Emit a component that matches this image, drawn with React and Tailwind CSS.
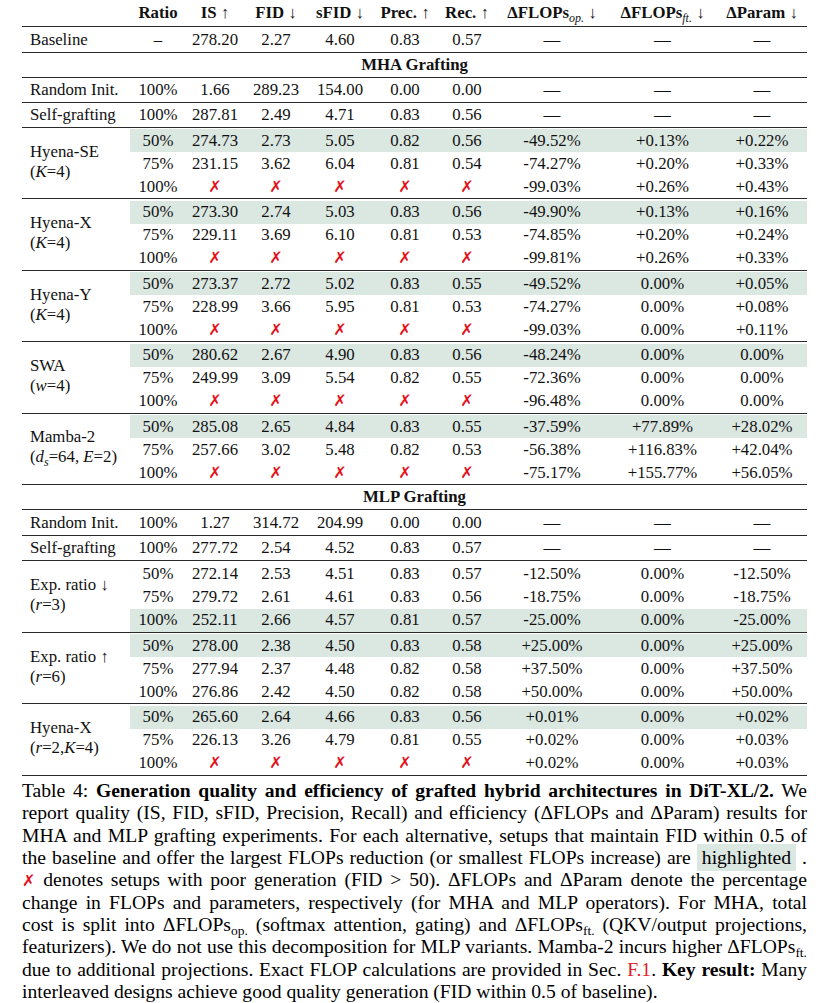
import React from 'react';

const cols = 'grid grid-cols-[56px_58px_64px_64px_66px_58px_112px_109px_90px] items-center';

const X = () => (
  <span className="[font-family:'DejaVu_Sans',sans-serif] font-bold text-[16px] leading-none text-[#e3121b]">✗</span>
);

const Sub = ({ children, italic }) => (
  <span className={italic ? 'relative top-[4px] text-[12px] italic font-normal' : 'relative top-[4px] text-[13.5px]'}>{children}</span>
);

const Arrow = ({ up }) => <span className="font-normal">{up ? ' ↑' : ' ↓'}</span>;

function Cells({ v, hl, tall }) {
  return (
    <div className={`${cols} ${tall ? 'h-full' : 'h-[23.07px]'} ${hl ? 'bg-[#dbe7e1]' : ''}`}>
      {v.map((x, i) => (
        <div key={i} className="text-center whitespace-nowrap">
          {x === 'x' ? <X /> : x}
        </div>
      ))}
    </div>
  );
}

function SingleRow({ label, v, h }) {
  return (
    <div className={`flex border-b border-[#2a2a2a] ${h}`}>
      <div className="w-[108px] pl-[8px] flex items-center whitespace-nowrap">{label}</div>
      <Cells v={v} tall />
    </div>
  );
}

function Group({ name, param, rows }) {
  return (
    <div className="flex border-b border-[#2a2a2a]">
      <div className="w-[108px] pl-[8px] flex flex-col justify-center leading-[20px] pb-[3px] whitespace-nowrap">
        <div>{name}</div>
        <div>{param}</div>
      </div>
      <div className="flex flex-col pt-[1.3px]">
        {rows.map((r, i) => (
          <Cells key={i} v={r.v} hl={r.hl} />
        ))}
      </div>
    </div>
  );
}

const dash = ['—', '—', '—'];
const xs = ['x', 'x', 'x', 'x', 'x'];

const mha = [
  {
    name: 'Hyena-SE',
    param: <>(<i>K</i>=4)</>,
    rows: [
      { hl: true, v: ['50%', '274.73', '2.73', '5.05', '0.82', '0.56', '-49.52%', '+0.13%', '+0.22%'] },
      { v: ['75%', '231.15', '3.62', '6.04', '0.81', '0.54', '-74.27%', '+0.20%', '+0.33%'] },
      { v: ['100%', ...xs, '-99.03%', '+0.26%', '+0.43%'] },
    ],
  },
  {
    name: 'Hyena-X',
    param: <>(<i>K</i>=4)</>,
    rows: [
      { hl: true, v: ['50%', '273.30', '2.74', '5.03', '0.83', '0.56', '-49.90%', '+0.13%', '+0.16%'] },
      { v: ['75%', '229.11', '3.69', '6.10', '0.81', '0.53', '-74.85%', '+0.20%', '+0.24%'] },
      { v: ['100%', ...xs, '-99.81%', '+0.26%', '+0.33%'] },
    ],
  },
  {
    name: 'Hyena-Y',
    param: <>(<i>K</i>=4)</>,
    rows: [
      { hl: true, v: ['50%', '273.37', '2.72', '5.02', '0.83', '0.55', '-49.52%', '0.00%', '+0.05%'] },
      { v: ['75%', '228.99', '3.66', '5.95', '0.81', '0.53', '-74.27%', '0.00%', '+0.08%'] },
      { v: ['100%', ...xs, '-99.03%', '0.00%', '+0.11%'] },
    ],
  },
  {
    name: 'SWA',
    param: <>(<i>w</i>=4)</>,
    rows: [
      { hl: true, v: ['50%', '280.62', '2.67', '4.90', '0.83', '0.56', '-48.24%', '0.00%', '0.00%'] },
      { v: ['75%', '249.99', '3.09', '5.54', '0.82', '0.55', '-72.36%', '0.00%', '0.00%'] },
      { v: ['100%', ...xs, '-96.48%', '0.00%', '0.00%'] },
    ],
  },
  {
    name: 'Mamba-2',
    param: <>(<i>d</i><span className="relative top-[4px] text-[12px] italic">s</span>=64, <i>E</i>=2)</>,
    rows: [
      { hl: true, v: ['50%', '285.08', '2.65', '4.84', '0.83', '0.55', '-37.59%', '+77.89%', '+28.02%'] },
      { v: ['75%', '257.66', '3.02', '5.48', '0.82', '0.53', '-56.38%', '+116.83%', '+42.04%'] },
      { v: ['100%', ...xs, '-75.17%', '+155.77%', '+56.05%'] },
    ],
  },
];

const mlp = [
  {
    name: <>Exp. ratio ↓</>,
    param: <>(<i>r</i>=3)</>,
    rows: [
      { v: ['50%', '272.14', '2.53', '4.51', '0.83', '0.57', '-12.50%', '0.00%', '-12.50%'] },
      { v: ['75%', '279.72', '2.61', '4.61', '0.83', '0.56', '-18.75%', '0.00%', '-18.75%'] },
      { hl: true, v: ['100%', '252.11', '2.66', '4.57', '0.81', '0.57', '-25.00%', '0.00%', '-25.00%'] },
    ],
  },
  {
    name: <>Exp. ratio ↑</>,
    param: <>(<i>r</i>=6)</>,
    rows: [
      { hl: true, v: ['50%', '278.00', '2.38', '4.50', '0.83', '0.58', '+25.00%', '0.00%', '+25.00%'] },
      { v: ['75%', '277.94', '2.37', '4.48', '0.82', '0.58', '+37.50%', '0.00%', '+37.50%'] },
      { v: ['100%', '276.86', '2.42', '4.50', '0.82', '0.58', '+50.00%', '0.00%', '+50.00%'] },
    ],
  },
  {
    name: 'Hyena-X',
    param: <>(<i>r</i>=2,<i>K</i>=4)</>,
    rows: [
      { hl: true, v: ['50%', '265.60', '2.64', '4.66', '0.83', '0.56', '+0.01%', '0.00%', '+0.02%'] },
      { v: ['75%', '226.13', '3.26', '4.79', '0.81', '0.55', '+0.02%', '0.00%', '+0.03%'] },
      { v: ['100%', ...xs, '+0.02%', '0.00%', '+0.03%'] },
    ],
  },
];

const J = ({ children }) => (
  <div className="h-[22.33px] text-justify [text-align-last:justify] whitespace-nowrap">{children}</div>
);

export default function App() {
  return (
    <div className="min-h-screen bg-white text-[#111] [font-family:'Liberation_Serif','Times_New_Roman',serif]">
      <div className="ml-[22px] w-[785px]">
        {/* table */}
        <div className="text-[16.8px] leading-[20px]">
          <div className="flex h-[27px] border-b border-[#2a2a2a] font-bold">
            <div className="w-[108px]" />
            <div className={`${cols} h-full`}>
              <div className="text-center">Ratio</div>
              <div className="text-center whitespace-nowrap">IS<Arrow up /></div>
              <div className="text-center whitespace-nowrap">FID<Arrow /></div>
              <div className="text-center whitespace-nowrap">sFID<Arrow /></div>
              <div className="text-center whitespace-nowrap">Prec.<Arrow up /></div>
              <div className="text-center whitespace-nowrap">Rec.<Arrow up /></div>
              <div className="text-center whitespace-nowrap">ΔFLOPs<Sub italic>op.</Sub><Arrow /></div>
              <div className="text-center whitespace-nowrap">ΔFLOPs<Sub italic>ft.</Sub><Arrow /></div>
              <div className="text-center whitespace-nowrap">ΔParam<Arrow /></div>
            </div>
          </div>

          <SingleRow h="h-[26px]" label="Baseline" v={['–', '278.20', '2.27', '4.60', '0.83', '0.57', ...dash]} />

          <div className="h-[25px] flex items-center justify-center border-b border-[#2a2a2a] font-bold">MHA Grafting</div>
          <SingleRow h="h-[25px]" label="Random Init." v={['100%', '1.66', '289.23', '154.00', '0.00', '0.00', ...dash]} />
          <SingleRow h="h-[25px]" label="Self-grafting" v={['100%', '287.81', '2.49', '4.71', '0.83', '0.56', ...dash]} />
          {mha.map((g, i) => (
            <Group key={i} {...g} />
          ))}

          <div className="h-[25px] flex items-center justify-center border-b border-[#2a2a2a] font-bold">MLP Grafting</div>
          <SingleRow h="h-[26px]" label="Random Init." v={['100%', '1.27', '314.72', '204.99', '0.00', '0.00', ...dash]} />
          <SingleRow h="h-[25px]" label="Self-grafting" v={['100%', '277.72', '2.54', '4.52', '0.83', '0.57', ...dash]} />
          {mlp.map((g, i) => (
            <Group key={i} {...g} />
          ))}
        </div>

        {/* caption */}
        <div className="mt-[4px] text-[19.6px] leading-[22.33px] text-black">
          <J>
            Table 4: <b>Generation quality and efficiency of grafted hybrid architectures in DiT-XL/2.</b> We
          </J>
          <J>report quality (IS, FID, sFID, Precision, Recall) and efficiency (ΔFLOPs and ΔParam) results for</J>
          <J>MHA and MLP grafting experiments. For each alternative, setups that maintain FID within 0.5 of</J>
          <J>
            the baseline and offer the largest FLOPs reduction (or smallest FLOPs increase) are{' '}
            <span className="bg-[#dbe7e1] px-[5px] py-[3px]">highlighted</span> .
          </J>
          <J>
            <X /> denotes setups with poor generation (FID &gt; 50). ΔFLOPs and ΔParam denote the percentage
          </J>
          <J>change in FLOPs and parameters, respectively (for MHA and MLP operators). For MHA, total</J>
          <J>
            cost is split into ΔFLOPs<Sub>op.</Sub> (softmax attention, gating) and ΔFLOPs<Sub>ft.</Sub> (QKV/output projections,
          </J>
          <J>
            featurizers). We do not use this decomposition for MLP variants. Mamba-2 incurs higher ΔFLOPs<Sub>ft.</Sub>
          </J>
          <J>
            due to additional projections. Exact FLOP calculations are provided in Sec. <span className="text-[#e0202a]">F.1</span>. <b>Key result:</b> Many
          </J>
          <div className="h-[22.33px] whitespace-nowrap">interleaved designs achieve good quality generation (FID within 0.5 of baseline).</div>
        </div>
      </div>
    </div>
  );
}
